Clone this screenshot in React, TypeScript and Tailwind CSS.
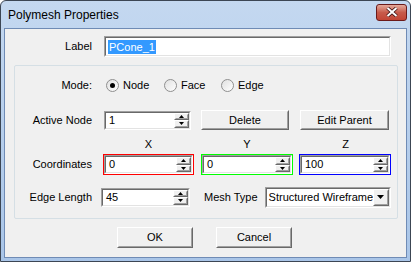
import React from "react";

const font = { fontFamily: "'Liberation Sans', Arial, sans-serif" };

const Sunken = ({ className = "", children }: { className?: string; children?: React.ReactNode }) => (
  <div className={`border border-t-[#a0a0a0] border-l-[#a0a0a0] border-b-white border-r-white ${className}`}>
    <div className="h-full border border-t-[#696969] border-l-[#696969] border-b-[#e3e3e3] border-r-[#e3e3e3] bg-white flex items-center">
      {children}
    </div>
  </div>
);

const Raised = ({ className = "", children }: { className?: string; children?: React.ReactNode }) => (
  <div className={`border border-t-white border-l-white border-b-[#696969] border-r-[#696969] bg-[#f0f0f0] ${className}`}>
    <div className="h-full border border-t-[#f0f0f0] border-l-[#f0f0f0] border-b-[#a0a0a0] border-r-[#a0a0a0] flex items-center justify-center">
      {children}
    </div>
  </div>
);

const Arrow = ({ up }: { up?: boolean }) => (
  <svg width="5" height="3" viewBox="0 0 5 3">
    <path d={up ? "M2.5 0 L5 3 L0 3 Z" : "M0 0 L5 0 L2.5 3 Z"} fill="#000" />
  </svg>
);

const Spinner = ({ value, className = "" }: { value: string; className?: string }) => (
  <Sunken className={`h-[19px] ${className}`}>
    <span className="flex-1 pl-[3px] text-[11px] leading-none text-black">{value}</span>
    <div className="flex flex-col h-full w-[15px]">
      <Raised className="flex-1">
        <Arrow up />
      </Raised>
      <Raised className="flex-1">
        <Arrow />
      </Raised>
    </div>
  </Sunken>
);

const Radio = ({ checked, label }: { checked?: boolean; label: string }) => (
  <div className="flex items-center">
    <div className="w-[13px] h-[13px] rounded-full border border-[#8f8f8f] bg-gradient-to-br from-[#e0e0e0] to-white flex items-center justify-center">
      {checked && <div className="w-[5px] h-[5px] rounded-full bg-black" />}
    </div>
    <span className="ml-[4px] text-[11px] text-black">{label}</span>
  </div>
);

const Button = ({ label, className = "" }: { label: string; className?: string }) => (
  <Raised className={`h-[20px] ${className}`}>
    <span className="text-[11px] text-black">{label}</span>
  </Raised>
);

export default function App() {
  return (
    <div className="w-[411px] h-[262px] bg-white" style={font}>
      <div className="w-full h-full rounded-t-[6px] border border-[#3c4654] bg-gradient-to-b from-[#c4d8f0] to-[#a9c5e8] flex flex-col">
        {/* title bar */}
        <div className="h-[27px] flex items-center justify-between pl-[7px] pr-[3px]">
          <span className="text-[12px] text-black">Polymesh Properties</span>
          <div className="w-[31px] h-[17px] -mt-[5px] rounded-[3px] border border-[#6b1a1a] bg-gradient-to-b from-[#e4a99b] via-[#c75b4b] to-[#c24535] flex items-center justify-center">
            <svg width="12" height="10" viewBox="0 0 12 10">
              <path d="M1.5 1 L10.5 9 M10.5 1 L1.5 9" stroke="#3a1010" strokeWidth="3.6" />
              <path d="M1.5 1 L10.5 9 M10.5 1 L1.5 9" stroke="#fff" strokeWidth="2" />
            </svg>
          </div>
        </div>
        {/* client */}
        <div className="flex-1 mx-[3px] mb-[3px] border border-[#6f8bb5] bg-[#f0f0f0] flex flex-col">
          <div className="flex items-center mt-[7px] h-[21px]">
            <span className="w-[87px] text-right text-[11px] text-black">Label</span>
            <Sunken className="ml-[12px] w-[287px] h-[21px]">
              <span className="ml-[2px] px-[1px] bg-[#3399ff] text-white text-[11px] leading-[14px]">PCone_1</span>
            </Sunken>
          </div>

          {/* group box */}
          <div className="mt-[8px] ml-[9px] w-[384px] h-[154px] border border-[#d5dfe5] rounded-[2px] flex flex-col">
            <div className="flex items-center mt-[12px] h-[14px]">
              <span className="w-[77px] text-right text-[11px] text-black">Mode:</span>
              <div className="ml-[14px] flex items-center">
                <div className="w-[58px]"><Radio checked label="Node" /></div>
                <div className="w-[57px]"><Radio label="Face" /></div>
                <Radio label="Edge" />
              </div>
            </div>

            <div className="flex items-center mt-[18px] h-[20px]">
              <span className="w-[77px] text-right text-[11px] text-black">Active Node</span>
              <Spinner value="1" className="ml-[12px] w-[87px]" />
              <Button label="Delete" className="ml-[10px] w-[88px]" />
              <Button label="Edit Parent" className="ml-[11px] w-[89px]" />
            </div>

            <div className="flex items-center mt-[7px] h-[14px] text-[11px] text-black">
              <span className="ml-[89px] w-[89px] text-center">X</span>
              <span className="ml-[8px] w-[92px] text-center">Y</span>
              <span className="ml-[7px] w-[91px] text-center">Z</span>
            </div>

            <div className="flex items-center mt-[3px] h-[21px]">
              <span className="w-[77px] text-right text-[11px] text-black">Coordinates</span>
              <div className="ml-[11px] w-[91px] h-[21px] border border-[#ff0000]">
                <Spinner value="0" className="w-full" />
              </div>
              <div className="ml-[7px] w-[92px] h-[21px] border border-[#00ff00]">
                <Spinner value="0" className="w-full" />
              </div>
              <div className="ml-[6px] w-[92px] h-[21px] border border-[#0000ff]">
                <Spinner value="100" className="w-full" />
              </div>
            </div>

            <div className="flex items-center mt-[12px] h-[20px]">
              <span className="w-[77px] text-right text-[11px] text-black">Edge Length</span>
              <Spinner value="45" className="ml-[9px] w-[89px]" />
              <span className="ml-[14px] text-[11px] text-black">Mesh Type</span>
              <Sunken className="ml-[7px] w-[126px] h-[21px]">
                <span className="flex-1 overflow-hidden whitespace-nowrap pl-[2px] text-[11px] text-black">Structured Wireframe</span>
                <Raised className="w-[16px] h-full">
                  <svg width="7" height="4" viewBox="0 0 7 4">
                    <path d="M0 0 L7 0 L3.5 4 Z" fill="#000" />
                  </svg>
                </Raised>
              </Sunken>
            </div>
          </div>

          <div className="flex items-center mt-[8px]">
            <Button label="OK" className="ml-[112px] w-[76px] h-[21px]" />
            <Button label="Cancel" className="ml-[23px] w-[76px] h-[21px]" />
          </div>
        </div>
      </div>
    </div>
  );
}
